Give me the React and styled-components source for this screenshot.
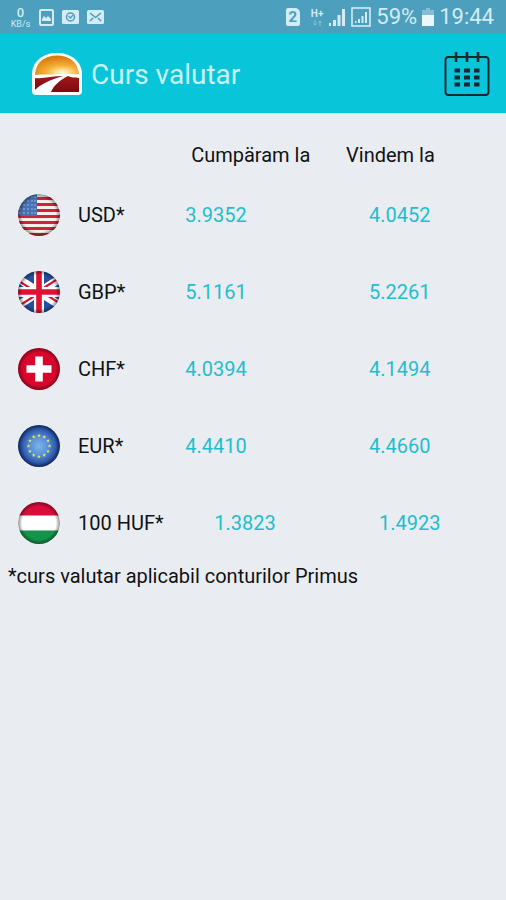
import React from 'react'
import styled, { createGlobalStyle } from 'styled-components';

const rates = [
  { code: "USD*", flag: "us", buy: "3.9352", sell: "4.0452" },
  { code: "GBP*", flag: "gb", buy: "5.1161", sell: "5.2261" },
  { code: "CHF*", flag: "ch", buy: "4.0394", sell: "4.1494" },
  { code: "EUR*", flag: "eu", buy: "4.4410", sell: "4.4660" },
  { code: "100 HUF*", flag: "hu", buy: "1.3823", sell: "1.4923", wide: true },
]

function UsFlag() {
  return (
    <>
      <rect width="42" height="42" fill="#f8eeee" />
      {[3, 9, 15, 21, 27, 33, 39].map((y) => (
        <rect key={y} y={y} width="42" height="3" fill="#cc2438" />
      ))}
      <rect width="19" height="22" fill="#4672b4" />
      {[3, 7, 11, 15, 19].map((y) =>
        [2, 6, 10, 14, 17].map((x) => (
          <circle key={`${x}-${y}`} cx={x} cy={y} r="0.8" fill="#a9c2e2" />
        ))
      )}
    </>
  )
}

function GbFlag() {
  return (
    <>
      <rect width="42" height="42" fill="#2450a0" />
      <path d="M-4 5 46 37M46 5-4 37" stroke="#fff" strokeWidth="8" />
      <path d="M-4 7 18 21M46 4 24 18M46 35 24 21M-4 38 18 24" stroke="#d3152f" strokeWidth="2.2" />
      <path d="M21 0V42M0 21H42" stroke="#fff" strokeWidth="10" />
      <path d="M21 0V42M0 21H42" stroke="#e01233" strokeWidth="5.6" />
    </>
  )
}

function ChFlag() {
  return (
    <>
      <rect width="42" height="42" fill="#d8062c" />
      <path d="M21 8.5V33.5M8.5 21H33.5" stroke="#fff" strokeWidth="7.6" />
    </>
  )
}

function EuFlag() {
  const stars = Array.from({ length: 12 }, (_, i) => (i * Math.PI) / 6)
  return (
    <>
      <rect width="42" height="42" fill="url(#euBlue)" />
      {stars.map((a) => (
        <path
          key={a}
          d="M0-2 .5-.6 1.9-.6 .8.3 1.2 1.7 0 .8-1.2 1.7-.8.3-1.9-.6-.5-.6Z"
          fill="#eeeb58"
          transform={`translate(${21 + 10.5 * Math.sin(a)} ${21 - 10.5 * Math.cos(a)})`}
        />
      ))}
    </>
  )
}

function HuFlag() {
  return (
    <>
      <rect width="42" height="14" fill="#d90c3a" />
      <rect y="13.5" width="42" height="15" fill="#fff" />
      <rect y="28.5" width="42" height="14" fill="#14934a" />
    </>
  )
}

const flags = { us: UsFlag, gb: GbFlag, ch: ChFlag, eu: EuFlag, hu: HuFlag }

function Flag({ name }) {
  const Picture = flags[name]
  return (
    <FlagIcon viewBox="0 0 42 42" aria-hidden="true">
      <defs>
        <clipPath id={`clip-${name}`}>
          <circle cx="21" cy="21" r="21" />
        </clipPath>
        <radialGradient id={`shade-${name}`}>
          <stop offset="0.8" stopColor="#000" stopOpacity="0" />
          <stop offset="1" stopColor="#100808" stopOpacity="0.45" />
        </radialGradient>
        {name === "eu" && (
          <radialGradient id="euBlue">
            <stop offset="0" stopColor="#7db4ea" />
            <stop offset="0.4" stopColor="#5a94d8" />
            <stop offset="0.7" stopColor="#3a68b8" />
            <stop offset="1" stopColor="#1c3f94" />
          </radialGradient>
        )}
      </defs>
      <g clipPath={`url(#clip-${name})`}>
        <Picture />
        <circle cx="21" cy="21" r="21" fill={`url(#shade-${name})`} />
      </g>
    </FlagIcon>
  )
}

function Logo() {
  return (
    <LogoIcon viewBox="0 0 50 42" aria-hidden="true">
      <defs>
        <radialGradient id="sun" cx="0.62" cy="0.88" r="0.8">
          <stop offset="0" stopColor="#fffbe0" />
          <stop offset="0.15" stopColor="#fde7a0" />
          <stop offset="0.45" stopColor="#f5b13a" />
          <stop offset="1" stopColor="#d87c0c" />
        </radialGradient>
        <linearGradient id="field" x2="0" y2="1">
          <stop offset="0" stopColor="#a3161c" />
          <stop offset="1" stopColor="#7c0a12" />
        </linearGradient>
      </defs>
      <path d="M0 20C1 8 11 0 25 0S49 8 50 20V38Q50 42 46 42H4Q0 42 0 38Z" fill="#fff" />
      <path d="M3 21C4 9 13 2.500 25 2.500S46 9 47 21C40 22 35 20 27 21 17 22 10 21 3 22Z" fill="url(#sun)" />
      <path d="M3 25C12 26 20 23 31 23 18 27 9 31 3 37Z" fill="url(#field)" />
      <path d="M36 23C39 25 43 24 47 25V39H19C22 32 28 27 36 23Z" fill="url(#field)" />
    </LogoIcon>
  )
}

function CalendarIcon() {
  return (
    <svg width="46" height="46" viewBox="0 0 46 46" fill="none" stroke="#17282e" aria-hidden="true">
      <rect x="1.5" y="6" width="43" height="38" rx="3" strokeWidth="2" />
      <path d="M12 1V11M23 1V11M34 1V11" strokeWidth="2.6" />
      <path
        d="M10.5 19.5H16M20 19.5H26M30 19.5H35.5M10.5 26.500H16M20 26.500H26M30 26.500H35.5M10.5 33.500H16M20 33.500H26M30 33.500H35.5"
        strokeWidth="3.8"
      />
    </svg>
  )
}

function StatusBar() {
  return (
    <Status>
      <StatusGroup $gap="8px">
        <Speed>
          <b>0</b>
          <span>KB/s</span>
        </Speed>
        <svg width="15" height="17" viewBox="0 0 15 17" aria-hidden="true">
          <rect x="1" y="1" width="13" height="15" rx="1" fill="none" stroke="#d3ecf5" strokeWidth="2" />
          <path d="M3 12V10L5 7 7 9 9 7 12 10V12Z" fill="#d3ecf5" />
        </svg>
        <svg width="17" height="14" viewBox="0 0 17 14" aria-hidden="true">
          <rect width="17" height="14" rx="1.5" fill="#d3ecf5" />
          <circle cx="8.5" cy="7" r="4" fill="none" stroke="#4c9fbd" strokeWidth="1.5" />
          <path d="M6.5 6 8.5 8 11 5" fill="none" stroke="#4c9fbd" strokeWidth="1.3" />
        </svg>
        <svg width="17" height="14" viewBox="0 0 17 14" aria-hidden="true">
          <rect width="17" height="14" rx="1.5" fill="#d3ecf5" />
          <path d="M3 3 8.5 7.500 14 3M3 11 6 8M14 11 11 8" fill="none" stroke="#4c9fbd" strokeWidth="1.600" />
        </svg>
      </StatusGroup>
      <StatusGroup $gap="5px">
        <Sim>2</Sim>
        <Network>
          <b>H+</b>
          <svg width="9" height="6" viewBox="0 0 9 6" stroke="#8fc4d9" fill="none" aria-hidden="true">
            <path d="M2 0V5M.5 3.5 2 5 3.5 3.5M7 6V1M5.5 2.5 7 1 8.5 2.5" />
          </svg>
        </Network>
        <svg width="18" height="18" viewBox="0 0 18 18" fill="#d3ecf5" aria-hidden="true">
          <path d="M1 15H3V18H1ZM5 12H8V18H5ZM9.5 7H12.5V18H9.5ZM14 1H17V18H14Z" />
        </svg>
        <svg width="20" height="20" viewBox="0 0 20 20" fill="#d3ecf5" aria-hidden="true">
          <rect x="1" y="1" width="18" height="18" fill="none" stroke="#d3ecf5" strokeWidth="1.6" />
          <path d="M4 14H5.5V16H4ZM7 12H9V16H7ZM10.5 9H12.5V16H10.5ZM14 5H16V16H14Z" />
        </svg>
        <span>59%</span>
        <svg width="12" height="18" viewBox="0 0 12 18" aria-hidden="true">
          <path d="M4 0H8V2H12V18H0V2H4Z" fill="#86bfd5" />
          <path d="M0 7H12V18H0Z" fill="#eaf7fb" />
        </svg>
        <span>19:44</span>
      </StatusGroup>
    </Status>
  )
}

function App() {
  return (
    <>
      <GlobalStyle />
      <StatusBar />
      <Header>
        <Logo />
        <h1>Curs valutar</h1>
        <CalendarButton type="button" aria-label="Calendar">
          <CalendarIcon />
        </CalendarButton>
      </Header>
      <Content>
        <RateTable>
          <thead>
            <tr>
              <NameColumn />
              <HeadCell scope="col" $indent="9px">Cumpäram la</HeadCell>
              <HeadCell scope="col" $indent="2px">Vindem la</HeadCell>
            </tr>
          </thead>
          <tbody>
            {rates.map((rate) => (
              <RateRow key={rate.code}>
                <th scope="row">
                  <Currency>
                    <Flag name={rate.flag} />
                    {rate.code}
                  </Currency>
                </th>
                <Rate $indent={rate.wide ? "32px" : "3px"}>{rate.buy}</Rate>
                <Rate $indent={rate.wide ? "35px" : "25px"}>{rate.sell}</Rate>
              </RateRow>
            ))}
          </tbody>
        </RateTable>
        <Note>*curs valutar aplicabil conturilor Primus</Note>
      </Content>
    </>
  )
}

const GlobalStyle = createGlobalStyle`
  * {
    box-sizing: border-box;
  }
  body {
    margin: 0;
    background-color: #e9edf1;
    color: #101214;
    font-family: Roboto, "Liberation Sans", sans-serif;
    font-size: 20px;
    line-height: 24px;
  }
`;

const Status = styled.div`
  display: flex;
  align-items: center;
  justify-content: space-between;
  height: 34px;
  padding: 0 12px 0 10px;
  background-color: #4c9fbd;
  color: #d3ecf5;
  font-size: 22px;
`;

const StatusGroup = styled.div`
  display: flex;
  align-items: center;
  gap: ${(props) => props.$gap};
`;

const Speed = styled.div`
  display: flex;
  flex-direction: column;
  align-items: center;
  width: 21px;
  b {
    font-size: 13px;
    line-height: 13px;
    font-weight: 500;
  }
  span {
    font-size: 9px;
    line-height: 10px;
  }
`;

const Sim = styled.span`
  width: 14px;
  margin-right: 6px;
  border-radius: 2px;
  border-top-right-radius: 5px;
  background-color: #d3ecf5;
  color: #4c9fbd;
  font-size: 15px;
  font-weight: 700;
  line-height: 18px;
  text-align: center;
`;

const Network = styled.div`
  display: flex;
  flex-direction: column;
  align-items: center;
  gap: 2px;
  b {
    font-size: 10px;
    line-height: 9px;
  }
`;

const Header = styled.header`
  display: flex;
  align-items: center;
  gap: 9px;
  height: 79px;
  padding: 0 16px 0 32px;
  background-color: #09c5d9;
  h1 {
    margin: 0;
    padding-top: 3px;
    color: #c9f3f8;
    font-size: 28px;
    font-weight: 400;
    line-height: 32px;
  }
`;

const LogoIcon = styled.svg`
  width: 50px;
  height: 42px;
`;

const CalendarButton = styled.button`
  display: flex;
  margin-left: auto;
  padding: 0;
  border: none;
  background: none;
  cursor: pointer;
`;

const Content = styled.main`
  padding-top: 21px;
`;

const RateTable = styled.table`
  width: 100%;
  table-layout: fixed;
  border-collapse: collapse;
  th,
  td {
    font-weight: 400;
    text-align: left;
  }
`;

const NameColumn = styled.td`
  width: 36%;
`;

const HeadCell = styled.th`
  height: 42px;
  padding: 0 0 0 ${(props) => props.$indent};
`;

const RateRow = styled.tr`
  height: 77px;
  th {
    padding: 0 0 0 18px;
  }
`;

const Currency = styled.div`
  display: flex;
  align-items: center;
  gap: 18px;
`;

const FlagIcon = styled.svg`
  width: 42px;
  height: 42px;
`;

const Rate = styled.td`
  padding: 0 0 0 ${(props) => props.$indent};
  color: #1fbdd0;
`;

const Note = styled.p`
  margin: 3px 8px;
`;

export default App
